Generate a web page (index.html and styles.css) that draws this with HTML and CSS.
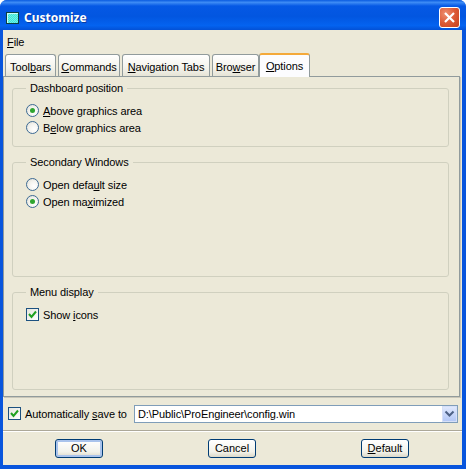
FILE: index.html
```html
<!DOCTYPE html>
<html lang="en">
<head>
    <meta charset="UTF-8">
    <meta name="viewport" content="width=device-width, initial-scale=1.0">
    <title>Customize</title>
    <link rel="stylesheet" href="styles.css">
</head>
<body>
    <div class="window">
        <div class="titlebar">
            <span class="app-icon"></span>
            <span class="title-text">Customize</span>
            <button class="close-btn" aria-label="Close">
                <svg width="13" height="13" viewBox="0 0 13 13"><path d="M2 2 L11 11 M11 2 L2 11" stroke="#fff" stroke-width="2.2" fill="none"/></svg>
            </button>
        </div>
        <div class="client">
            <div class="menubar"><span><u>F</u>ile</span></div>
            <div class="tabs">
                <div class="tab tab-toolbars">Tool<u>b</u>ars</div>
                <div class="tab tab-commands"><u>C</u>ommands</div>
                <div class="tab tab-nav"><u>N</u>avigation Tabs</div>
                <div class="tab tab-browser">Bro<u>w</u>ser</div>
                <div class="tab tab-options active"><u>O</u>ptions</div>
            </div>
            <div class="panel">
                <fieldset class="group group-dashboard">
                    <legend>Dashboard position</legend>
                    <div class="option"><span class="radio checked"></span><span><u>A</u>bove graphics area</span></div>
                    <div class="option"><span class="radio"></span><span>B<u>e</u>low graphics area</span></div>
                </fieldset>
                <fieldset class="group group-secondary">
                    <legend>Secondary Windows</legend>
                    <div class="option"><span class="radio"></span><span>Open defa<u>u</u>lt size</span></div>
                    <div class="option"><span class="radio checked"></span><span>Open ma<u>x</u>imized</span></div>
                </fieldset>
                <fieldset class="group group-menu">
                    <legend>Menu display</legend>
                    <div class="option">
                        <span class="check">
                            <svg width="11" height="11" viewBox="0 0 11 11"><path d="M2 5 L4.5 8 L9 2.5" stroke="#21a121" stroke-width="2" fill="none"/></svg>
                        </span>
                        <span>Show <u>i</u>cons</span>
                    </div>
                </fieldset>
            </div>
            <div class="save-row">
                <span class="check">
                    <svg width="11" height="11" viewBox="0 0 11 11"><path d="M2 5 L4.5 8 L9 2.5" stroke="#21a121" stroke-width="2" fill="none"/></svg>
                </span>
                <span class="save-label">Automatically <u>s</u>ave to</span>
                <div class="combo">
                    <span class="combo-value">D:\Public\ProEngineer\config.win</span>
                    <span class="combo-arrow">
                        <svg width="11" height="8" viewBox="0 0 11 8"><path d="M1.5 1.5 L5.5 5.5 L9.5 1.5" stroke="#4d6185" stroke-width="2" fill="none"/></svg>
                    </span>
                </div>
            </div>
            <div class="button-row">
                <button class="btn btn-default">OK</button>
                <button class="btn">Cancel</button>
                <button class="btn"><u>D</u>efault</button>
            </div>
        </div>
    </div>
</body>
</html>
```

FILE: styles.css
```css
* {
    margin: 0;
    padding: 0;
    box-sizing: border-box;
    font-family: "Liberation Sans", Arial, sans-serif;
}

body {
    background: #fff;
    width: 467px;
    height: 470px;
    overflow: hidden;
    font-size: 11px;
    letter-spacing: -0.1px;
    color: #000;
}

u {
    text-underline-offset: 1px;
}

.window {
    width: 466px;
    height: 469px;
    display: flex;
    flex-direction: column;
    background: #0855dd;
    border-radius: 7px 7px 0 0;
    overflow: hidden;
}

.titlebar {
    height: 30px;
    flex: none;
    display: flex;
    align-items: center;
    padding: 5px 6px 0 6px;
    background: linear-gradient(180deg, #0a5be0 0%, #3d8bf5 8%, #0558e5 20%, #0256e0 55%, #0463f0 85%, #0351d6 100%);
}

.app-icon {
    width: 13px;
    height: 12px;
    margin-right: 5px;
    border: 1px solid #0b3f3f;
    background: repeating-conic-gradient(#2ee6e6 0% 25%, #7ff0d8 0% 50%) 0 0 / 2px 2px;
    box-shadow: inset 1px 1px 0 #c8fff8;
}

.title-text {
    flex: 1;
    color: #fff;
    font-family: "Noto Sans", sans-serif;
    font-weight: 700;
    font-size: 12px;
    letter-spacing: 0;
    text-shadow: 1px 1px 0 #0a3aa0;
}

.close-btn {
    width: 21px;
    height: 21px;
    display: flex;
    align-items: center;
    justify-content: center;
    border: 1px solid #fff;
    border-radius: 3px;
    background: radial-gradient(circle at 30% 30%, #ee8f70 0%, #dc5a36 50%, #c6401c 100%);
}

.client {
    flex: 1;
    margin: 0 4px 4px 3px;
    background: #ece9d8;
    display: flex;
    flex-direction: column;
    min-height: 0;
}

.menubar {
    height: 23px;
    flex: none;
    padding: 5px 0 0 4px;
    line-height: 15px;
}

.tabs {
    display: flex;
    align-items: flex-end;
    height: 24px;
    flex: none;
    padding-left: 2px;
    position: relative;
    z-index: 1;
    margin-bottom: -1px;
}

.tab {
    height: 22px;
    margin-right: 2px;
    margin-bottom: 1px;
    border: 1px solid #919b9c;
    border-bottom: none;
    border-radius: 3px 3px 0 0;
    background: linear-gradient(180deg, #fff 0%, #f4f3ec 60%, #e6e4d6 100%);
    text-align: center;
    line-height: 24px;
}

.tab-toolbars { width: 51px; }
.tab-commands { width: 62px; }
.tab-nav { width: 88px; }
.tab-browser { width: 47px; margin-right: 0; }

.tab.active {
    width: 51px;
    height: 24px;
    margin-bottom: 0;
    background: #fcfcfe;
    border-top: 2px solid #f4a93a;
    line-height: 22px;
}

.panel {
    width: 457px;
    height: 321px;
    flex: none;
    border: 1px solid #919b9c;
    box-shadow: 1px 1px 0 #c9c6b8;
    background: #ece9d8;
    padding: 3px 10px 0 8px;
    display: flex;
    flex-direction: column;
    gap: 7px;
}

.group {
    border: 1px solid #d0d0bf;
    border-radius: 3px;
    padding: 5px 0 0 13px;
    min-width: 0;
}

.group legend {
    padding: 0 4px;
    line-height: 17px;
}

.group-dashboard { height: 67px; }
.group-secondary { height: 123px; }
.group-menu { height: 106px; }

.option {
    display: flex;
    align-items: center;
    height: 17px;
    gap: 4px;
}

.radio {
    width: 13px;
    height: 13px;
    flex: none;
    border: 1px solid #3c6a94;
    border-radius: 50%;
    background: radial-gradient(circle at 65% 65%, #fff 0%, #f4f3ee 50%, #dcdcd2 100%);
    display: flex;
    align-items: center;
    justify-content: center;
}

.radio.checked::after {
    content: "";
    width: 5px;
    height: 5px;
    border-radius: 50%;
    background: #2fa52f;
}

.check {
    width: 13px;
    height: 13px;
    flex: none;
    border: 1px solid #1c5180;
    background: linear-gradient(135deg, #e6e6de 0%, #fff 100%);
    display: flex;
    align-items: center;
    justify-content: center;
}

.save-row {
    height: 34px;
    flex: none;
    display: flex;
    align-items: center;
    padding-left: 5px;
    border-bottom: 1px solid #aca899;
    box-shadow: 0 1px 0 #fff;
}

.save-label {
    margin-left: 4px;
    width: 109px;
    flex: none;
    white-space: nowrap;
}

.combo {
    width: 324px;
    height: 18px;
    display: flex;
    align-items: center;
    background: #fff;
    border: 1px solid #7f9db9;
    padding-left: 3px;
}

.combo-value {
    flex: 1;
}

.combo-arrow {
    width: 15px;
    height: 16px;
    display: flex;
    align-items: center;
    justify-content: center;
    background: linear-gradient(180deg, #dfe8fd 0%, #b4c8f6 100%);
    border: 1px solid #d6e0f8;
}

.button-row {
    flex: 1;
    display: flex;
    align-items: center;
    justify-content: space-between;
    padding: 0 53px 0 52px;
}

.btn {
    width: 48px;
    height: 19px;
    border: 1px solid #003c74;
    border-radius: 3px;
    background: linear-gradient(180deg, #fff 0%, #f2f2ea 70%, #dcd8c8 100%);
    font-size: 11px;
    color: #000;
}

.btn-default {
    box-shadow: inset 0 0 0 2px #a9c3ec;
}
```
